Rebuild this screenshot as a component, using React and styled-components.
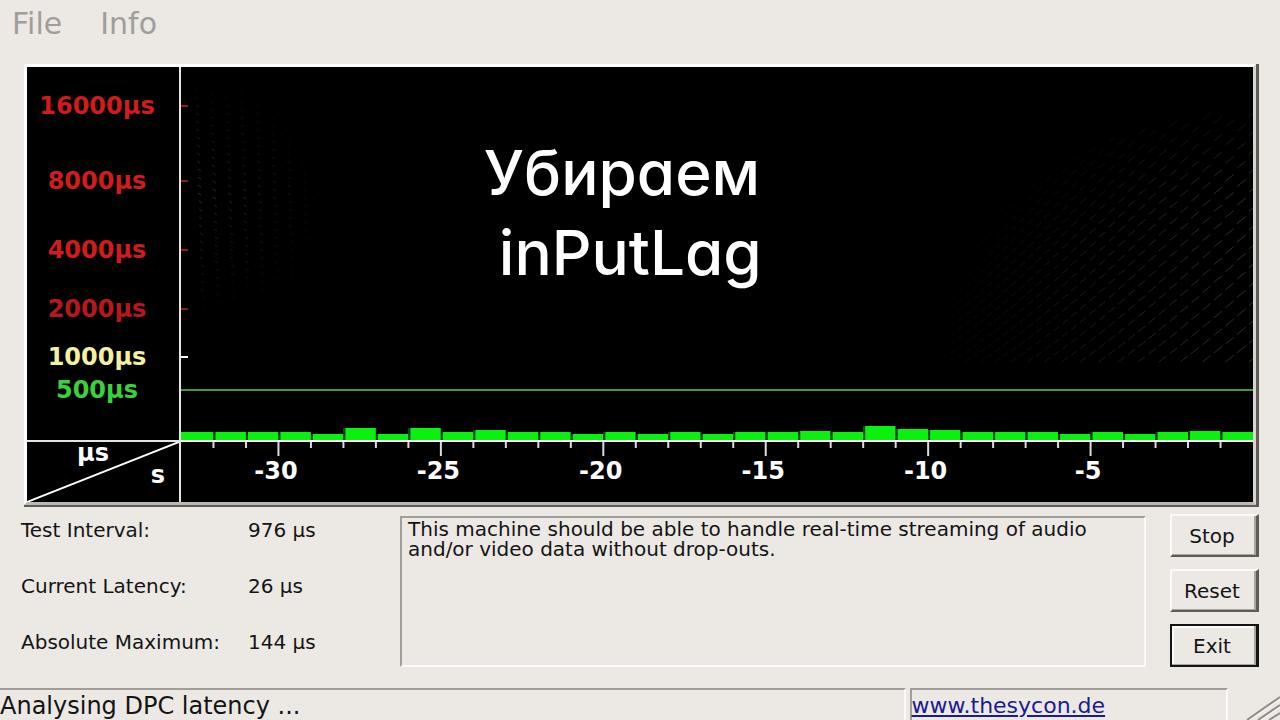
// Imports
import React from 'react'
import styled, { createGlobalStyle } from 'styled-components'



// Data
const bars = [8, 8, 8, 8, 6, 12, 6, 12, 8, 10, 8, 8, 6, 8, 6, 8, 6, 8, 8, 9, 8, 14, 11, 10, 8, 8, 8, 6, 8, 6, 8, 9, 8]
const seconds = bars.length
const plotHeight = 373

const levels = [
  { label: '16000µs', height: 51, color: '#d01c1c', tick: '#8c1a1e' },
  { label: '8000µs', height: 75, color: '#d01c1c', tick: '#8c1a1e' },
  { label: '4000µs', height: 69, color: '#d01c1c', tick: '#8c1a1e' },
  { label: '2000µs', height: 59, color: '#b8181c', tick: '#8c1a1e' },
  { label: '1000µs', height: 48, color: '#f2f1a0', tick: '#ffffff' },
  { label: '500µs', height: 33, color: '#3ad23c' },
]

const readings = [
  { name: 'Test Interval:', value: '976 µs' },
  { name: 'Current Latency:', value: '26 µs' },
  { name: 'Absolute Maximum:', value: '144 µs' },
]

const percent = (n) => `${(n / seconds) * 100}%`

// Faint honeycomb dashes, wider and brighter towards the right edge
const rightMesh = []
for (let col = 0, x = 356; x > 6; col++) {
  const near = x / 360
  const stepX = 6 + near * 6
  const stepY = 7 + near * 12
  const top = x > 100 ? 46 + (356 - x) * (356 - x) * 0.0014 : 138 + (100 - x) * 1.4
  for (let row = 0; row < 40; row++) {
    const y = 295 - row * stepY - (col % 2) * (stepY / 2)
    if (y < top) break
    const depth = Math.min(1, (y - top) / 80)
    rightMesh.push({ x, y, len: 3 + near * 6, opacity: near * (0.25 + depth * 0.6) })
  }
  x -= stepX
}

const leftMesh = []
for (let col = 0; col < 10; col++) {
  for (let row = 0; row < 30; row++) {
    const fade = 1 - Math.abs(row - 13) / 17
    leftMesh.push({
      x: 14 + col * 15 + Math.round(row / 4),
      y: 22 + row * 8 + (col % 2) * 4,
      opacity: Math.max(0, fade * (1 - col / 10)),
    })
  }
}



// Styles
const GlobalStyle = createGlobalStyle`
  * {
    box-sizing: border-box;
  }
  body {
    margin: 0;
    background: #ece9e5;
    color: #141414;
    font-family: "DejaVu Sans", Verdana, sans-serif;
    font-size: 20px;
    line-height: 20px;
  }
`

const Window = styled.div`
  min-height: 100vh;
  display: flex;
  flex-direction: column;
`

const MenuBar = styled.nav`
  height: 64px;
  padding: 8px 12px;
  display: flex;
  align-items: flex-start;
  gap: 38px;
`

const MenuItem = styled.button`
  padding: 0;
  border: 0;
  background: none;
  color: #a19d99;
  font-family: inherit;
  font-size: 30px;
  line-height: 32px;
`

const Monitor = styled.main`
  position: relative;
  margin: 0 21px 0 24px;
  border-right: 3px solid #5f5c58;
  border-bottom: 2px solid #5f5c58;
`

const Chart = styled.div`
  display: grid;
  grid-template-columns: 154px 1fr;
  background: #000;
  border: 3px solid #fff;
  border-right-color: #d8d5d1;
  border-bottom: 3px solid #bdbab6;
  color: #fff;
  font-size: 24px;
  font-weight: bold;
  line-height: 24px;
`

const LevelColumn = styled.div`
  border-right: 2px solid #e4e4e4;
  padding-right: 12px;
`

const Level = styled.div`
  height: ${({ $height }) => $height}px;
  color: ${({ $color }) => $color};
  display: flex;
  align-items: flex-end;
  justify-content: center;
`

const Plot = styled.div`
  position: relative;
  height: ${plotHeight}px;
`

const PlotSvg = styled.svg`
  display: block;
  width: 100%;
  height: 100%;
`

const MeshSvg = styled.svg`
  position: absolute;
  top: 0;
  ${({ $side }) => $side}: 0;
`

const Corner = styled.div`
  position: relative;
  height: 62px;
  padding: 0 14px 0 50px;
  border-top: 2px solid #e4e4e4;
  border-right: 2px solid #e4e4e4;
  display: flex;
  flex-direction: column;
`

const CornerLine = styled.svg`
  position: absolute;
  inset: 0;
  width: 100%;
  height: 100%;
`

const Unit = styled.span`
  line-height: 22px;
  align-self: ${({ $end }) => ($end ? 'flex-end' : 'flex-start')};
`

const TimeAxis = styled.div`
  border-top: 2px solid #fff;
`

const TickSvg = styled.svg`
  display: block;
  width: 100%;
  height: 17px;
`

const TimeLabels = styled.div`
  display: grid;
  grid-template-columns: repeat(${seconds}, 1fr);
`

const TimeLabel = styled.span`
  grid-column: ${({ $line }) => `${$line} / ${$line + 2}`};
  padding-right: 5px;
  display: flex;
  justify-content: center;
`

const Caption = styled.h1`
  position: absolute;
  top: 69px;
  left: 0;
  right: 36px;
  margin: 0;
  color: #fff;
  font-family: Inter, sans-serif;
  font-feature-settings: "cv11" 1;
  font-size: 62px;
  font-weight: 500;
  line-height: 80px;
  text-align: center;
`

const Details = styled.section`
  display: flex;
  padding: 7px 21px 21px;
`

const Readings = styled.dl`
  width: 379px;
  margin: 0;
  padding-top: 6px;
  display: grid;
  grid-template-columns: 227px 1fr;
  grid-auto-rows: 20px;
  row-gap: 36px;

  dd {
    margin: 0;
  }
`

const Message = styled.div`
  flex: 1;
  margin: 2px 24px 0 0;
  padding: 1px 6px;
  border: 2px solid #fbfaf8;
  border-top-color: #a19e9a;
  border-left-color: #a19e9a;
`

const Actions = styled.div`
  width: 89px;
  display: flex;
  flex-direction: column;
  gap: 12px;
`

const ActionButton = styled.button`
  height: 43px;
  padding: 0 4px 0 0;
  background: #ece9e5;
  color: #141414;
  font-family: inherit;
  font-size: 20px;
  line-height: 20px;
  border: 2px solid ${({ $focused }) => ($focused ? '#141414' : '#fbfaf8')};
  border-right: 3px solid ${({ $focused }) => ($focused ? '#141414' : '#5f5c58')};
  border-bottom: 2px solid ${({ $focused }) => ($focused ? '#141414' : '#5f5c58')};
  box-shadow: inset -2px -1px 0 #a8a5a1${({ $focused }) => ($focused ? ', inset 2px 2px 0 #fbfaf8' : '')};
`

const StatusBar = styled.footer`
  height: 32px;
  display: flex;
  gap: 4px;
  line-height: 32px;
`

const StatusPane = styled.div`
  flex: ${({ $grow }) => $grow};
  font-size: ${({ $sunken }) => ($sunken ? 22 : 24)}px;
  white-space: nowrap;
  border-top: 2px solid #a19e9a;
  border-right: 2px solid #fbfaf8;
  border-left: ${({ $sunken }) => ($sunken ? '2px solid #a19e9a' : '0')};
`

const SiteLink = styled.a`
  color: #1c1c8c;
  text-decoration: underline;
`

const Grip = styled.svg`
  width: 48px;
  height: 32px;
`



// Chart parts
const MonitorPlot = () => {
  let y = 0
  return (
    <Plot>
      <MeshSvg $side='left' width='170' height='300' aria-hidden='true'>
        {leftMesh.map((dot, index) => (
          <path key={index} d={`M${dot.x} ${dot.y}l3 2`} stroke='#303030' opacity={dot.opacity} />
        ))}
      </MeshSvg>
      <MeshSvg $side='right' width='360' height='300' aria-hidden='true'>
        {rightMesh.map((dash, index) => (
          <path
            key={index}
            d={`M${dash.x} ${dash.y}l${dash.len} ${-dash.len * 0.8}`}
            stroke='#4a3232'
            opacity={dash.opacity}
          />
        ))}
      </MeshSvg>
      <PlotSvg role='img' aria-label='DPC latency'>
        {levels.map((level) => {
          y += level.height
          return level.tick ? (
            <rect key={level.label} x='0' y={y - 13} width='7' height='2' fill={level.tick} />
          ) : (
            <rect key={level.label} x='0' y={y - 13} width='100%' height='2' fill='#3f9a42' />
          )
        })}
        {bars.map((height, index) => (
          <svg key={index} x={percent(index)} width={percent(1)} y={plotHeight - height} height={height}>
            <rect width='100%' height='100%' fill='#0bf00f' />
            <rect width='2' height='100%' fill={index ? '#043a05' : '#0bf00f'} />
          </svg>
        ))}
      </PlotSvg>
    </Plot>
  )
}

const MonitorTimeAxis = () => {
  return (
    <TimeAxis>
      <TickSvg aria-hidden='true'>
        {bars.slice(1).map((_, index) => (
          <line
            key={index}
            x1={percent(index + 1)}
            x2={percent(index + 1)}
            y1='0'
            y2={(seconds - index - 1) % 5 === 0 ? 14 : 6}
            stroke='#dcdcdc'
            strokeWidth='2'
          />
        ))}
      </TickSvg>
      <TimeLabels>
        {[30, 25, 20, 15, 10, 5].map((second) => (
          <TimeLabel key={second} $line={seconds - second}>-{second}</TimeLabel>
        ))}
      </TimeLabels>
    </TimeAxis>
  )
}



// Main Function
const App = () => {
  return (
    <Window>
      <GlobalStyle />
      <MenuBar>
        <MenuItem>File</MenuItem>
        <MenuItem>Info</MenuItem>
      </MenuBar>
      <Monitor>
        <Chart>
          <LevelColumn>
            {levels.map((level) => (
              <Level key={level.label} $height={level.height} $color={level.color}>{level.label}</Level>
            ))}
          </LevelColumn>
          <MonitorPlot />
          <Corner>
            <CornerLine viewBox='0 0 152 60' preserveAspectRatio='none' aria-hidden='true'>
              <path d='M0 60L152 0' stroke='#fff' strokeWidth='2' />
            </CornerLine>
            <Unit>µs</Unit>
            <Unit $end>s</Unit>
          </Corner>
          <MonitorTimeAxis />
        </Chart>
        <Caption>
          Убираем
          <br />
          &nbsp;inPutLag
        </Caption>
      </Monitor>
      <Details>
        <Readings>
          {readings.map((reading) => (
            <React.Fragment key={reading.name}>
              <dt>{reading.name}</dt>
              <dd>{reading.value}</dd>
            </React.Fragment>
          ))}
        </Readings>
        <Message>
          This machine should be able to handle real-time streaming of audio and/or video data without drop-outs.
        </Message>
        <Actions>
          <ActionButton>Stop</ActionButton>
          <ActionButton>Reset</ActionButton>
          <ActionButton $focused>Exit</ActionButton>
        </Actions>
      </Details>
      <StatusBar>
        <StatusPane $grow='908'>Analysing DPC latency ...</StatusPane>
        <StatusPane $grow='316' $sunken>
          <SiteLink href='#'>www.thesycon.de</SiteLink>
        </StatusPane>
        <Grip aria-hidden='true'>
          <path d='M15 32L48 9M26 32L48 17M37 32L48 25' stroke='#8f8c88' strokeWidth='2' fill='none' />
          <path d='M18 32L48 11M29 32L48 19' stroke='#fbfaf8' strokeWidth='1' fill='none' />
        </Grip>
      </StatusBar>
    </Window>
  )
}


// Export
export default App;
